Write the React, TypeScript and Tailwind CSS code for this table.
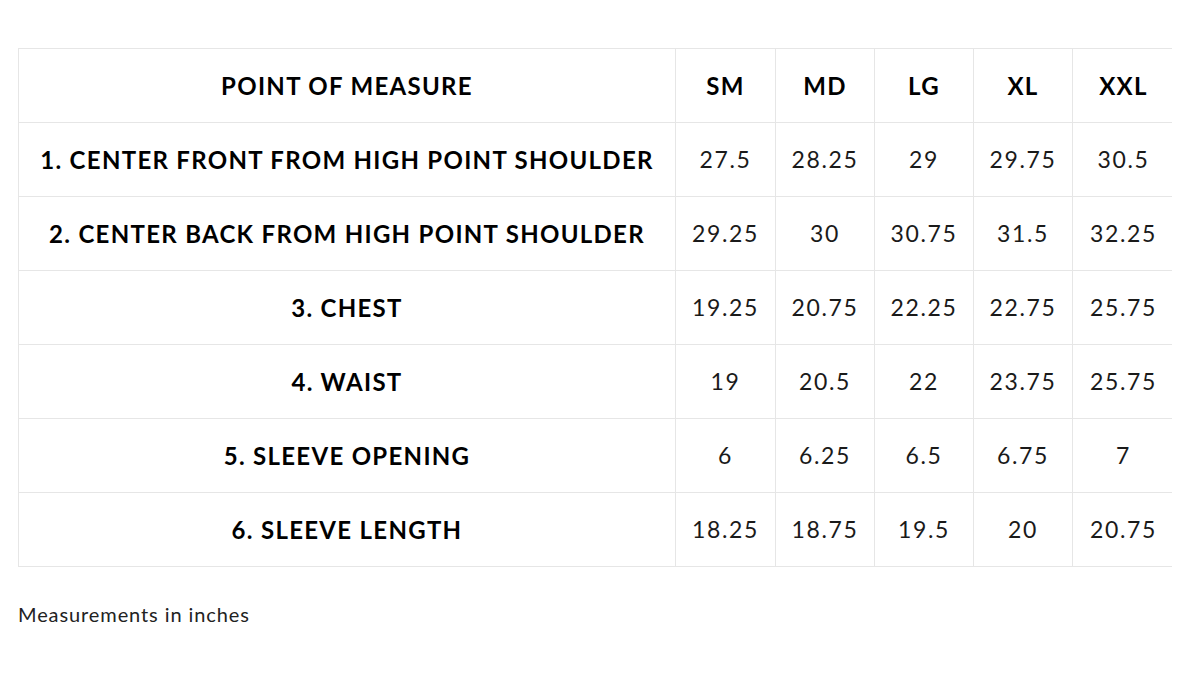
const sizes = ["SM", "MD", "LG", "XL", "XXL"];

const rows: { label: string; values: string[] }[] = [
  { label: "1. CENTER FRONT FROM HIGH POINT SHOULDER", values: ["27.5", "28.25", "29", "29.75", "30.5"] },
  { label: "2. CENTER BACK FROM HIGH POINT SHOULDER", values: ["29.25", "30", "30.75", "31.5", "32.25"] },
  { label: "3. CHEST", values: ["19.25", "20.75", "22.25", "22.75", "25.75"] },
  { label: "4. WAIST", values: ["19", "20.5", "22", "23.75", "25.75"] },
  { label: "5. SLEEVE OPENING", values: ["6", "6.25", "6.5", "6.75", "7"] },
  { label: "6. SLEEVE LENGTH", values: ["18.25", "18.75", "19.5", "20", "20.75"] },
];

export default function App() {
  return (
    <div className="min-h-[673px] w-[1184px] bg-white pl-[18px] pt-[48px] font-['Lato','Liberation_Sans',sans-serif] text-black">
      <div className="w-[1154px] overflow-hidden">
        <table className="w-[1156px] table-fixed border-collapse">
          <colgroup>
            <col className="w-[657px]" />
            <col className="w-[100px]" />
            <col className="w-[99px]" />
            <col className="w-[99px]" />
            <col className="w-[99px]" />
            <col className="w-[102px]" />
          </colgroup>
          <thead>
            <tr className="h-[74px]">
              <th className="border border-[#e6e6e6] text-center text-[24px] font-bold tracking-[1.3px]">
                POINT OF MEASURE
              </th>
              {sizes.map((s) => (
                <th key={s} className="border border-[#e6e6e6] text-center text-[24px] font-bold tracking-[1.3px]">
                  {s}
                </th>
              ))}
            </tr>
          </thead>
          <tbody>
            {rows.map((r) => (
              <tr key={r.label} className="h-[74px]">
                <td className="border border-[#e6e6e6] text-center text-[24px] font-bold tracking-[1.3px]">
                  {r.label}
                </td>
                {r.values.map((v, i) => (
                  <td key={i} className="border border-[#e6e6e6] text-center text-[23px] font-normal tracking-[1.6px] text-[#1a1a1a]">
                    {v}
                  </td>
                ))}
              </tr>
            ))}
          </tbody>
        </table>
      </div>
      <p className="mt-[32px] text-[20px] font-normal tracking-[0.9px] text-[#222]">Measurements in inches</p>
    </div>
  );
}
